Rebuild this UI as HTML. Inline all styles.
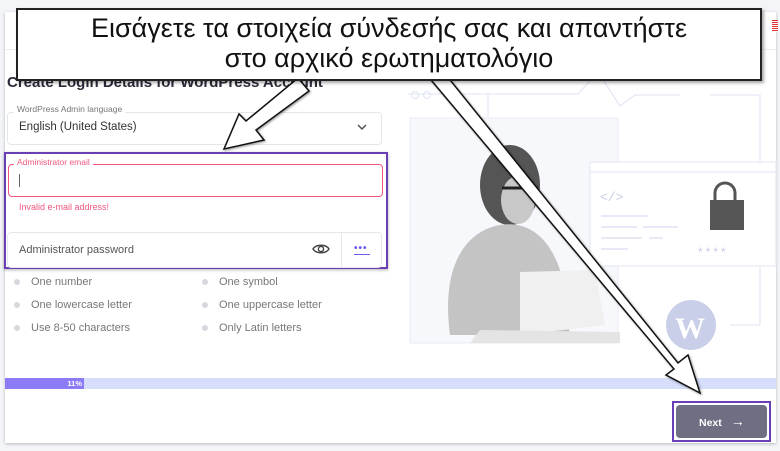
<!DOCTYPE html>
<html><head><meta charset="utf-8"><style>
*{margin:0;padding:0;box-sizing:border-box}
body{width:780px;height:451px;background:#f3f5f9;font-family:"Liberation Sans","DejaVu Sans",sans-serif;position:relative;overflow:hidden}
.card{position:absolute;left:5px;top:12px;width:771px;height:431px;background:#fff;box-shadow:0 1px 3px rgba(0,0,0,.25)}
.abs{position:absolute}
.t{color:#444;font-size:11px}
.dot{position:absolute;width:6px;height:6px;border-radius:50%;background:#d6d8de}
.req{position:absolute;font-size:11px;color:#777}
</style></head><body>
<div class="card">
 <div class="abs" style="left:0;top:37px;width:771px;height:1px;background:#eceef2"></div>
 <div class="abs" style="left:767px;top:8px;width:6px;height:12px;background:repeating-linear-gradient(#d33 0 1px,#fff 1px 2px)"></div>
</div>
<div class="abs" style="left:7px;top:74px;font-size:15px;font-weight:bold;color:#2b2b3a">Create Login Details for WordPress Account</div>
<div class="abs" style="left:7px;top:112px;width:375px;height:33px;border:1px solid #e4e6ea;border-radius:4px"></div>
<div class="abs" style="left:14px;top:104px;background:#fff;padding:0 3px;font-size:8.5px;color:#777">WordPress Admin language</div>
<div class="abs t" style="left:19px;top:121px;font-size:11.5px;color:#333">English (United States)</div>
<svg class="abs" style="left:356px;top:123px" width="12" height="8"><path d="M2 2l4 4 4-4" stroke="#555" stroke-width="1.5" fill="none"/></svg>
<div class="abs" style="left:4px;top:152px;width:384px;height:117px;border:2px solid #6a3fb5;box-shadow:0 1px 3px rgba(0,0,0,.3)"></div>
<div class="abs" style="left:8px;top:164px;width:375px;height:33px;border:1.5px solid #f0577f;border-radius:4px"></div>
<div class="abs" style="left:14px;top:157px;background:#fff;padding:0 3px;font-size:8.5px;color:#f0577f">Administrator email</div>
<div class="abs" style="left:19px;top:174px;width:1px;height:13px;background:#666"></div>
<div class="abs" style="left:19px;top:202px;font-size:9px;color:#f0577f">Invalid e-mail address!</div>
<div class="abs" style="left:7px;top:232px;width:375px;height:36px;border:1px solid #e4e6ea;border-radius:4px"></div>
<div class="abs" style="left:341px;top:232px;width:1px;height:36px;background:#e4e6ea"></div>
<div class="abs t" style="left:19px;top:244px;color:#555">Administrator password</div>
<svg class="abs" style="left:312px;top:243px" width="18" height="12"><path d="M1 6C4 1 14 1 17 6C14 11 4 11 1 6Z" stroke="#444" stroke-width="1.4" fill="none"/><circle cx="9" cy="6" r="2.6" stroke="#444" stroke-width="1.4" fill="none"/></svg>
<div class="abs" style="left:354px;top:247px;font-size:10px;letter-spacing:1px;color:#6a5cf0;font-weight:bold;line-height:4px">•••</div>
<div class="abs" style="left:354px;top:254px;width:16px;height:1px;background:#6a5cf0"></div>
<div class="dot" style="left:14px;top:279px"></div><div class="req" style="left:31px;top:276px">One number</div>
<div class="dot" style="left:14px;top:302px"></div><div class="req" style="left:31px;top:299px">One lowercase letter</div>
<div class="dot" style="left:14px;top:325px"></div><div class="req" style="left:31px;top:322px">Use 8-50 characters</div>
<div class="dot" style="left:202px;top:279px"></div><div class="req" style="left:219px;top:276px">One symbol</div>
<div class="dot" style="left:202px;top:302px"></div><div class="req" style="left:219px;top:299px">One uppercase letter</div>
<div class="dot" style="left:202px;top:325px"></div><div class="req" style="left:219px;top:322px">Only Latin letters</div>
<div class="abs" style="left:5px;top:378px;width:771px;height:11px;background:#d6defb"></div>
<div class="abs" style="left:5px;top:378px;width:79px;height:11px;background:#8b7cf6;color:#fff;font-size:7.5px;font-weight:bold;text-align:right;padding-right:2px;line-height:11px">11%</div>
<svg class="abs" style="left:390px;top:60px" width="390" height="300">
 <g stroke="#dfe3f3" fill="none" stroke-width="1">
  <circle cx="25" cy="35" r="3.5"/><circle cx="37" cy="35" r="3.5"/>
  <path d="M18 34H188L208 12L230 46L245 35H290M320 35H370V265H340"/>
  <path d="M98 34V58"/>
 </g>
 <rect x="20" y="58" width="208" height="225" fill="#f6f8fc" stroke="#e8ebf4"/>
 <rect x="200" y="102" width="186" height="104" fill="#fff" stroke="#e3e6f2"/>
 <path d="M200 112H386" stroke="#e3e6f2"/>
 <text x="210" y="141" font-size="13" fill="#c7cde3" font-family="Liberation Mono">&lt;/&gt;</text>
 <g stroke="#dfe3f3" stroke-width="1.5"><path d="M211 156H258M211 167H247M253 167H288M211 178H252M259 178H273M211 189H238"/></g>
 <path d="M325 140V133a10 10 0 0120 0V140" stroke="#555" stroke-width="3" fill="none"/>
 <rect x="320" y="140" width="34" height="30" fill="#555"/>
 <text x="308" y="196" font-size="12" fill="#c7cde3" letter-spacing="3">****</text>
 <circle cx="301" cy="265" r="25" fill="#c9cee9"/>
 <text x="285" y="278" font-size="30" fill="#fff" font-family="Liberation Serif" font-weight="bold">W</text>
 <ellipse cx="120" cy="125" rx="30" ry="40" fill="#555"/>
 <path d="M60 275C50 200 80 170 110 165C140 160 160 180 170 210L180 275Z" fill="#c4c4c4"/>
 <path d="M130 212L205 210L215 265L130 275Z" fill="#f0f0f0"/>
 <path d="M90 270L230 272L230 283L80 283Z" fill="#e4e4e4"/>
 <ellipse cx="128" cy="140" rx="17" ry="24" fill="#c8c8c8"/>
 <path d="M112 128H148" stroke="#222" stroke-width="3"/>
</svg>
<div class="abs" style="left:672px;top:401px;width:99px;height:41px;border:2px solid #6a3fb5"></div>
<div class="abs" style="left:676px;top:405px;width:91px;height:33px;background:#6e6f82;border-radius:4px;color:#fff;font-size:10.5px;font-weight:bold;line-height:33px;padding-left:23px">Next <span style="font-size:14px;margin-left:6px;font-weight:normal">→</span></div>
<svg class="abs" style="left:0;top:0" width="780" height="451">
 <g style="filter:drop-shadow(1px 1px 1px rgba(0,0,0,.4))">
 <polygon points="298,78 309,91 256,130 264,140 224,149 239,114 246,121" fill="#fff" stroke="#111" stroke-width="1.5"/>
 <polygon points="426,74 438,65 678,363 688,355 700,393 666,375 674,369" fill="#fff" stroke="#111" stroke-width="1.5"/>
 </g>
</svg>
<div class="abs" style="left:16px;top:8px;width:746px;height:73px;background:#fff;border:2px solid #222;box-shadow:2px 2px 3px rgba(0,0,0,.35);text-align:center;font-size:27px;line-height:30px;color:#111;padding-top:3px;font-family:'Liberation Sans','DejaVu Sans',sans-serif">Εισάγετε τα στοιχεία σύνδεσής σας και απαντήστε<br>στο αρχικό ερωτηματολόγιο</div>
</body></html>
